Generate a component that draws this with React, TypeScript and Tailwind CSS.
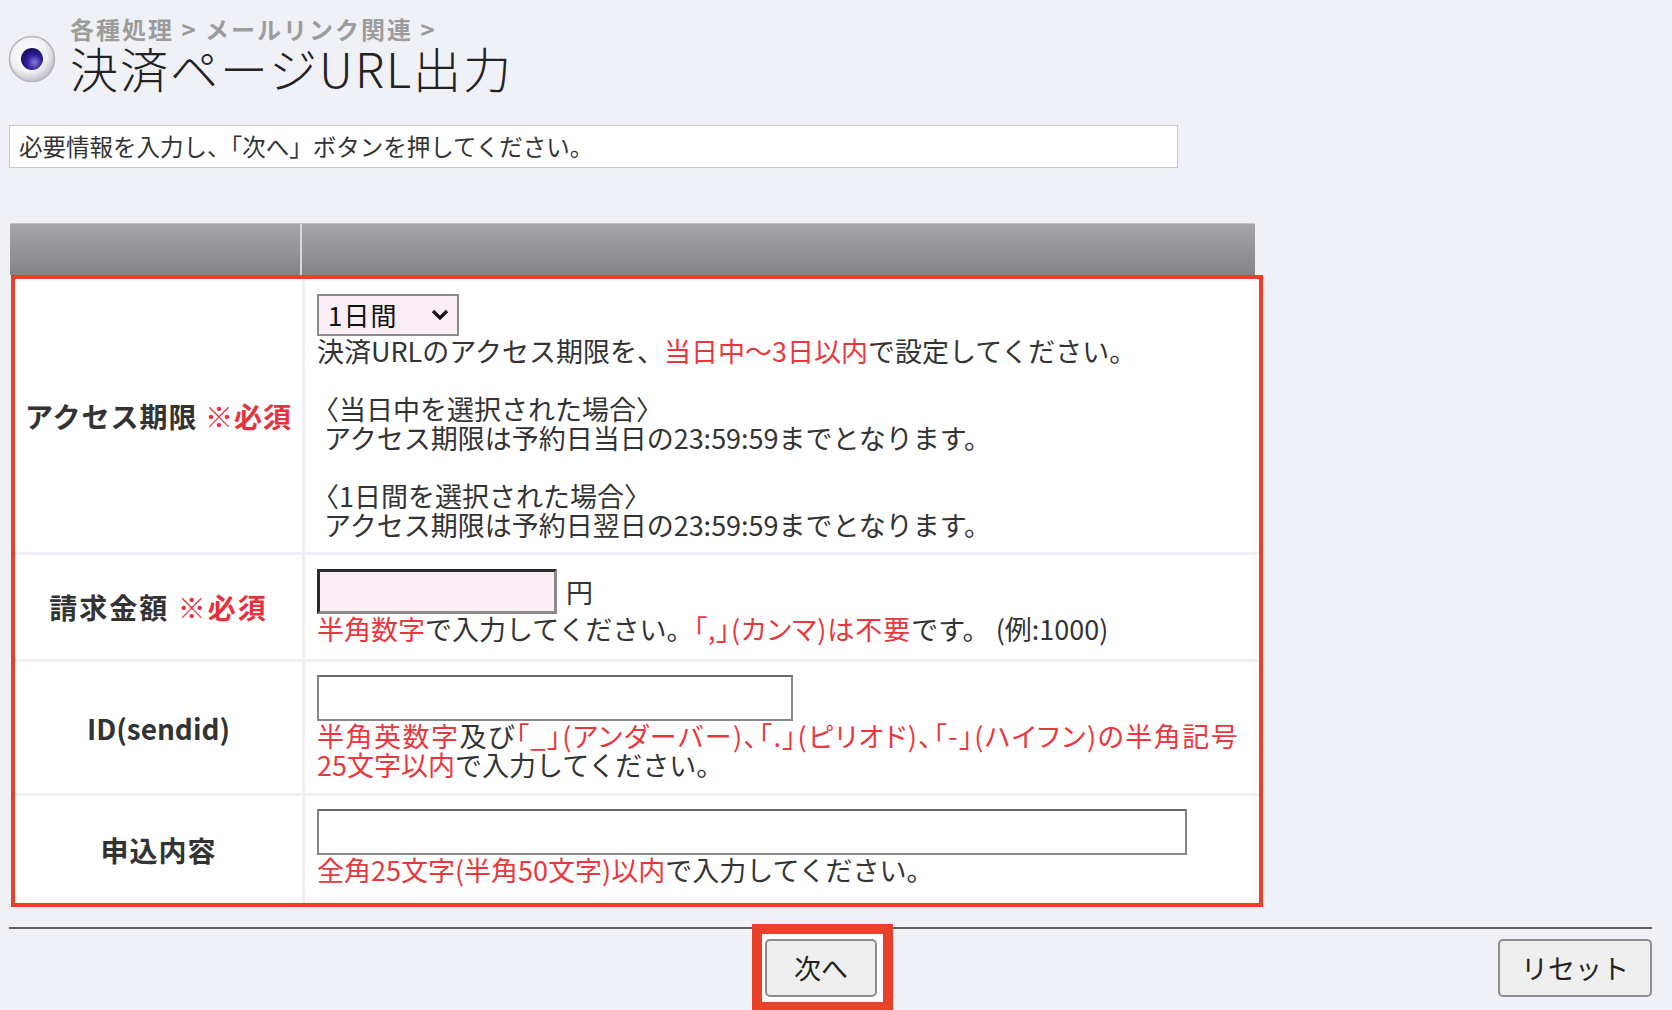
import React from "react";

const RED = "text-[#e8383d]";

function RadioIcon() {
  return (
    <svg width="48" height="48" viewBox="0 0 48 48" className="shrink-0">
      <defs>
        <radialGradient id="rb" cx="42%" cy="38%" r="62%">
          <stop offset="0%" stopColor="#ffffff" />
          <stop offset="65%" stopColor="#f1f1f5" />
          <stop offset="100%" stopColor="#c2c2ca" />
        </radialGradient>
        <radialGradient id="rd" cx="62%" cy="66%" r="62%">
          <stop offset="0%" stopColor="#8a7be0" />
          <stop offset="55%" stopColor="#2f209c" />
          <stop offset="100%" stopColor="#1a0f66" />
        </radialGradient>
      </defs>
      <circle cx="24" cy="24" r="22.5" fill="url(#rb)" stroke="#b3b3bb" strokeWidth="1.5" />
      <circle cx="24" cy="24" r="11" fill="url(#rd)" />
    </svg>
  );
}

function Row({
  label,
  children,
  last,
  pt,
  pb,
}: {
  label: React.ReactNode;
  children: React.ReactNode;
  last?: boolean;
  pt: string;
  pb: string;
}) {
  return (
    <div className={"flex " + (last ? "" : "border-b-[3px] border-[#eef0f6]")}>
      <div className="w-[287px] shrink-0 flex items-center justify-center text-[28px] leading-[32px] font-bold text-[#333]">
        {label}
      </div>
      <div className={"flex-1 border-l-[3px] border-[#eef0f6] pl-[12px] text-[27px] leading-[29px] " + pt + " " + pb}>
        {children}
      </div>
    </div>
  );
}

export default function App() {
  return (
    <div className="w-[1672px] h-[1010px] overflow-hidden bg-[#f0f1f6] text-[#333] font-['Noto_Sans_CJK_JP','Noto_Sans',sans-serif]">
      {/* Header */}
      <div className="flex items-start pl-[8px] pt-[16px]">
        <div className="mt-[19px]">
          <RadioIcon />
        </div>
        <div className="ml-[14px]">
          <div className="text-[24px] leading-[26px] tracking-[2px] font-bold text-[#9c9c9c]">
            各種処理 &gt; メールリンク関連 &gt;
          </div>
          <h1 className="text-[48px] leading-[50px] tracking-[2px] text-[#222] font-light">
            決済ページURL出力
          </h1>
        </div>
      </div>

      {/* Instruction */}
      <div className="ml-[9px] mt-[33px] w-[1169px] h-[43px] bg-white border border-[#c9c9cd] flex items-center pl-[9px] text-[23.5px]">
        必要情報を入力し、「次へ」ボタンを押してください。
      </div>

      {/* Table */}
      <div className="ml-[10px] mt-[55px] w-[1253px]">
        <div className="flex h-[52px] w-[1245px] bg-gradient-to-b from-[#a5a5aa] to-[#838388] border-t border-[#c4c4c8]">
          <div className="w-[292px] border-r-2 border-[#d9d9dd]" />
          <div className="flex-1" />
        </div>
        <div className="ml-[1px] w-[1252px] border-4 border-[#e8412a] bg-white">
          <Row
            pt="pt-[15px]"
            pb="pb-[13px]"
            label={
              <span className="tracking-[1px]">
                アクセス期限 <span className="text-[#e6323f]">※必須</span>
              </span>
            }
          >
            <div className="w-[142px] h-[42px] bg-[#fbeef7] border-2 border-[#8a8a8a] flex items-center justify-between pl-[9px] pr-[8px]">
              <span className="text-[26px] leading-none tracking-[1px] text-[#111]">1日間</span>
              <svg width="18" height="12" viewBox="0 0 18 12">
                <path d="M2 2 L9 9 L16 2" stroke="#111" strokeWidth="3.2" fill="none" />
              </svg>
            </div>
            <div>
              決済URLのアクセス期限を、<span className={RED}>当日中～3日以内</span>で設定してください。
            </div>
            <div className="h-[29px]" />
            <div className="-ml-[5px]">〈当日中を選択された場合〉</div>
            <div className="pl-[7px]">アクセス期限は予約日当日の23:59:59までとなります。</div>
            <div className="h-[29px]" />
            <div className="-ml-[5px]">〈1日間を選択された場合〉</div>
            <div className="pl-[7px]">アクセス期限は予約日翌日の23:59:59までとなります。</div>
          </Row>

          <Row
            pt="pt-[14px]"
            pb="pb-[16px]"
            label={
              <span className="tracking-[2px]">
                請求金額 <span className="text-[#e6323f]">※必須</span>
              </span>
            }
          >
            <div className="flex items-center">
              <div className="w-[240px] h-[45px] bg-[#faeff6] border-[3px] border-t-[#2a2a2a] border-l-[#2a2a2a] border-r-[#8a8a8a] border-b-[#8a8a8a]" />
              <span className="ml-[9px]">円</span>
            </div>
            <div>
              <span className={RED}>半角数字</span>で入力してください。
              <span className={RED + " [font-feature-settings:'palt'] tracking-[1px]"}>「,」(カンマ)は不要</span>
              です。 (例:1000)
            </div>
          </Row>

          <Row pt="pt-[13px]" pb="pb-[14px]" label={<span>ID(sendid)</span>}>
            <div className="w-[476px] h-[46px] bg-white border-2 border-[#878787] border-t-[#6a6a6a]" />
            <div className="[font-feature-settings:'palt'] tracking-[1.5px] whitespace-nowrap">
              <span className={RED}>半角英数字</span>及び
              <span className={RED}>「_」(アンダーバー)、「.」(ピリオド)、「-」(ハイフン)の半角記号</span>
            </div>
            <div>
              <span className={RED}>25文字以内</span>で入力してください。
            </div>
          </Row>

          <Row last pt="pt-[13px]" pb="pb-[19px]" label={<span className="tracking-[1px]">申込内容</span>}>
            <div className="w-[870px] h-[46px] bg-white border-2 border-[#878787] border-t-[#6a6a6a]" />
            <div>
              <span className={RED}>全角25文字(半角50文字)以内</span>で入力してください。
            </div>
          </Row>
        </div>
      </div>

      {/* Footer */}
      <div className="ml-[9px] mt-[20px] w-[1643px] border-t-2 border-[#5f5f5f]" />
      <div className="ml-[9px] mt-[10px] w-[1643px] flex">
        <div className="relative ml-[756px]">
          <div className="absolute -left-[13px] -top-[15px] -right-[16px] -bottom-[15px] border-[10px] border-[#e8412a] bg-white" />
          <button className="relative w-[112px] h-[58px] bg-[#efefef] border-2 border-[#8d8d8d] rounded-[5px] text-[27px] text-[#222]">
            次へ
          </button>
        </div>
        <button className="ml-auto w-[154px] h-[58px] bg-[#efefef] border-2 border-[#8d8d8d] rounded-[5px] text-[27px] text-[#222]">
          リセット
        </button>
      </div>
    </div>
  );
}
